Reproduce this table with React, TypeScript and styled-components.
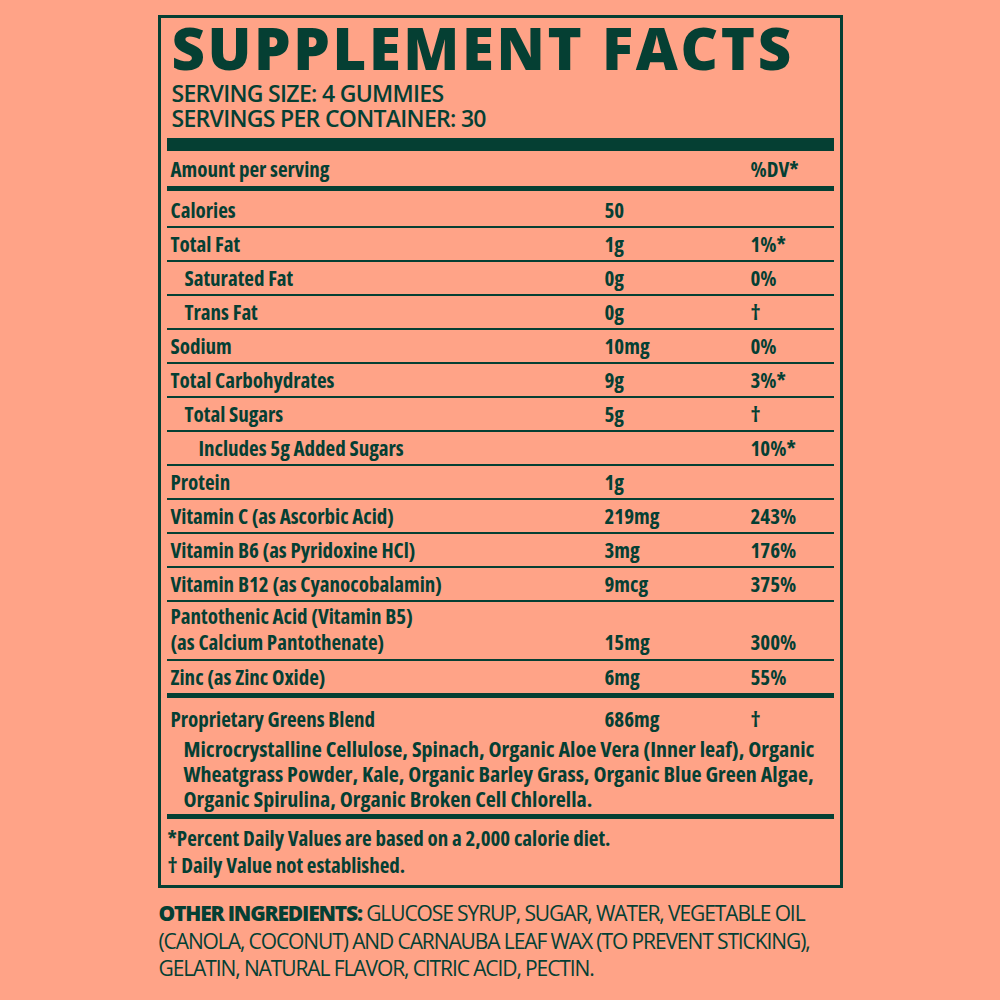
import React from "react";
import styled, { createGlobalStyle } from "styled-components";

const GREEN = "#053f33";
const SALMON = "#ffa387";

const GlobalStyle = createGlobalStyle`
  html, body { margin: 0; padding: 0; background: ${SALMON}; }
  #root { min-height: 1000px; }
`;

const Page = styled.div`
  width: 1000px;
  height: 1000px;
  background: ${SALMON};
  color: ${GREEN};
  padding-top: 15px;
  box-sizing: border-box;
  font-family: "Open Sans", "Liberation Sans", sans-serif;
`;

const Panel = styled.section`
  width: 685px;
  margin: 0 auto;
  border: 3px solid ${GREEN};
  box-sizing: border-box;
  padding: 0 6px;
`;

const Header = styled.header`
  padding-left: 5px;
  padding-bottom: 7px;
`;

const Title = styled.h1`
  margin: 0 0 3px 0;
  font-size: 58px;
  line-height: 60px;
  font-weight: 800;
  letter-spacing: 2.6px;
  white-space: nowrap;
`;

const ServingLine = styled.div`
  font-size: 23px;
  line-height: 25px;
  font-weight: 600;
  letter-spacing: -0.7px;
  white-space: nowrap;
`;

const Rule = styled.div<{ $h: number }>`
  height: ${(p) => p.$h}px;
  background: ${GREEN};
`;

const Grid = styled.div<{ $h?: number; $border?: boolean }>`
  display: grid;
  grid-template-columns: 434px 146px 1fr;
  padding-left: 4px;
  align-items: center;
  min-height: ${(p) => p.$h ?? 32}px;
  font-size: 21px;
  font-weight: 700;
  font-stretch: 75%;
  line-height: 26px;
  white-space: nowrap;
  border-bottom: ${(p) => (p.$border ? `2px solid ${GREEN}` : "none")};
`;

const Rows = styled.div`
  padding-top: 3px;
`;

const Label = styled.div<{ $indent?: number }>`
  padding-left: ${(p) => p.$indent ?? 0}px;
`;

const TallRow = styled(Grid)`
  align-items: end;
  padding-top: 1px;
  padding-bottom: 4px;
  min-height: 0;
`;

const Blend = styled.div`
  padding: 6px 0 3px 0;
`;

const BlendHead = styled(Grid)`
  min-height: 30px;
  line-height: 30px;
  margin-bottom: 2px;
`;

const BlendList = styled.div`
  padding-left: 17px;
  font-size: 22px;
  font-weight: 700;
  font-stretch: 75%;
  line-height: 25px;
  white-space: nowrap;
`;

const Foot = styled.div`
  padding: 6px 0 6px 1px;
  font-size: 21px;
  font-weight: 700;
  font-stretch: 75%;
  line-height: 27px;
  white-space: nowrap;
`;

const Other = styled.p`
  width: 685px;
  margin: 12px auto 0 auto;
  padding-left: 1px;
  box-sizing: border-box;
  font-size: 21px;
  line-height: 27.5px;
  font-weight: 500;
  letter-spacing: -1.1px;
  white-space: nowrap;
  text-transform: uppercase;
`;

const OtherHead = styled.strong`
  font-weight: 800;
  letter-spacing: -1.2px;
`;

type Nut = { label: string; amount?: string; dv?: string; indent?: number };

const nutrients: Nut[] = [
  { label: "Calories", amount: "50" },
  { label: "Total Fat", amount: "1g", dv: "1%*" },
  { label: "Saturated Fat", amount: "0g", dv: "0%", indent: 14 },
  { label: "Trans Fat", amount: "0g", dv: "†", indent: 14 },
  { label: "Sodium", amount: "10mg", dv: "0%" },
  { label: "Total Carbohydrates", amount: "9g", dv: "3%*" },
  { label: "Total Sugars", amount: "5g", dv: "†", indent: 14 },
  { label: "Includes 5g Added Sugars", dv: "10%*", indent: 28 },
  { label: "Protein", amount: "1g" },
  { label: "Vitamin C (as Ascorbic Acid)", amount: "219mg", dv: "243%" },
  { label: "Vitamin B6 (as Pyridoxine HCl)", amount: "3mg", dv: "176%" },
  { label: "Vitamin B12 (as Cyanocobalamin)", amount: "9mcg", dv: "375%" },
];

export default function App() {
  return (
    <Page>
      <GlobalStyle />
      <Panel>
        <Header>
          <Title>SUPPLEMENT FACTS</Title>
          <ServingLine>SERVING SIZE: 4 GUMMIES</ServingLine>
          <ServingLine>SERVINGS PER CONTAINER: 30</ServingLine>
        </Header>
        <Rule $h={13} />
        <Grid $h={35}>
          <Label>Amount per serving</Label>
          <div />
          <div>%DV*</div>
        </Grid>
        <Rule $h={5} />
        <Rows>
          {nutrients.map((n) => (
            <Grid key={n.label} $border>
              <Label $indent={n.indent}>{n.label}</Label>
              <div>{n.amount ?? ""}</div>
              <div>{n.dv ?? ""}</div>
            </Grid>
          ))}
          <TallRow $border>
            <Label>
              Pantothenic Acid (Vitamin B5)
              <br />
              (as Calcium Pantothenate)
            </Label>
            <div>15mg</div>
            <div>300%</div>
          </TallRow>
          <Grid>
            <Label>Zinc (as Zinc Oxide)</Label>
            <div>6mg</div>
            <div>55%</div>
          </Grid>
        </Rows>
        <Rule $h={5} />
        <Blend>
          <BlendHead>
            <Label>Proprietary Greens Blend</Label>
            <div>686mg</div>
            <div>†</div>
          </BlendHead>
          <BlendList>
            Microcrystalline Cellulose, Spinach, Organic Aloe Vera (Inner leaf), Organic
            <br />
            Wheatgrass Powder, Kale, Organic Barley Grass, Organic Blue Green Algae,
            <br />
            Organic Spirulina, Organic Broken Cell Chlorella.
          </BlendList>
        </Blend>
        <Rule $h={5} />
        <Foot>
          *Percent Daily Values are based on a 2,000 calorie diet.
          <br />† Daily Value not established.
        </Foot>
      </Panel>
      <Other>
        <OtherHead>Other Ingredients:</OtherHead> Glucose Syrup, Sugar, Water, Vegetable Oil
        <br />
        (Canola, Coconut) and Carnauba Leaf Wax (to Prevent Sticking),
        <br />
        Gelatin, Natural Flavor, Citric Acid, Pectin.
      </Other>
    </Page>
  );
}
